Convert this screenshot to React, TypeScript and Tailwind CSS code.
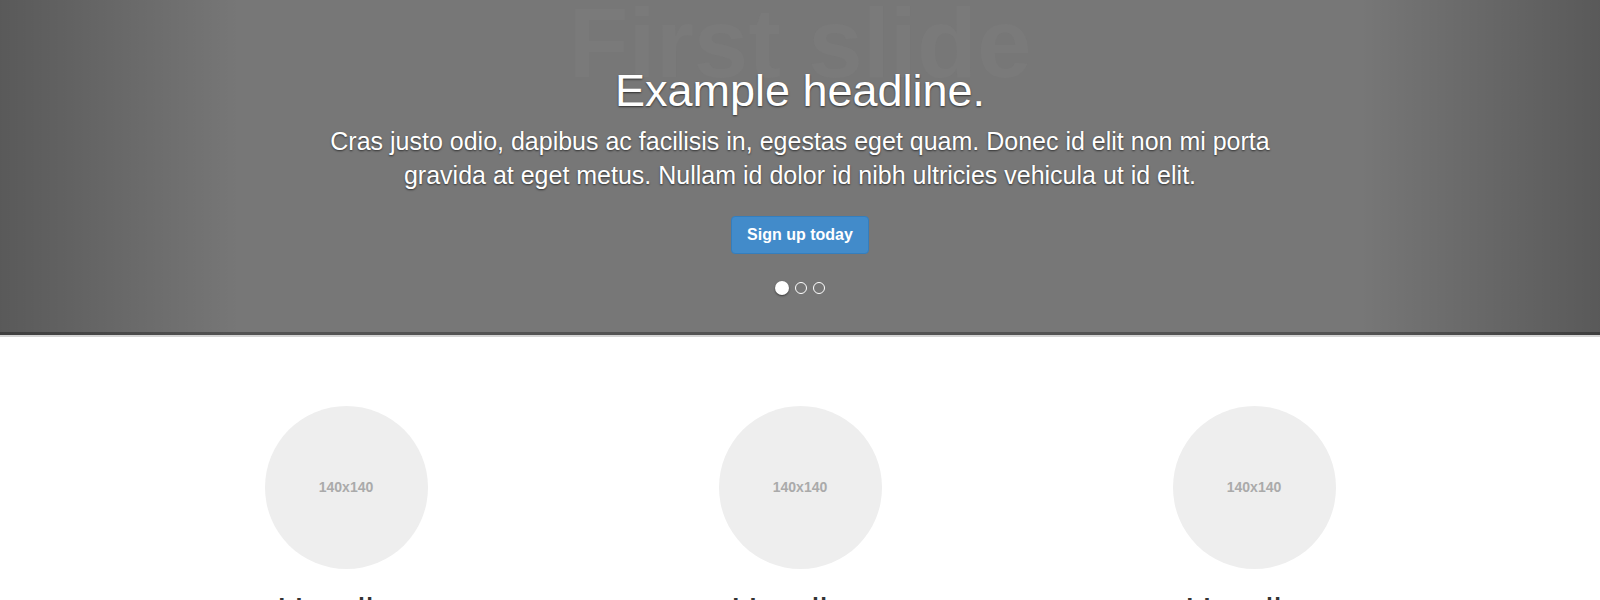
export default function App() {
  const features = ["Heading", "Heading", "Heading"];

  return (
    <div className="min-h-[600px] bg-white font-['Liberation_Sans',Arial,sans-serif] text-[#333] overflow-hidden">
      {/* carousel */}
      <div className="relative flex h-[335px] flex-col bg-[#777] overflow-hidden">
        <div className="pointer-events-none absolute left-1/2 top-[-6px] -translate-x-1/2 whitespace-nowrap text-[98px] font-bold leading-none text-[#7a7a7a]">
          First slide
        </div>

        <div className="relative flex flex-col items-center px-[20%] pt-[66px] text-center text-white [text-shadow:0_1px_2px_rgba(0,0,0,0.6)]">
          <h1 className="text-[45px] leading-[1.1]">Example headline.</h1>
          <p className="mt-[8px] text-[25px] leading-[34px]">
            Cras justo odio, dapibus ac facilisis in, egestas eget quam. Donec id elit non mi porta gravida at eget metus. Nullam id dolor id nibh ultricies vehicula ut id elit.
          </p>
          <button className="mt-[24px] flex h-[38px] items-center rounded-[4px] border border-[#357ebd] bg-[#428bca] px-[15px] text-[16px] font-bold text-white [text-shadow:none]">
            Sign up today
          </button>
          <div className="mt-[27px] flex items-center gap-[6px]">
            <span className="h-[14px] w-[14px] rounded-full bg-white shadow-[0_1px_2px_rgba(0,0,0,0.5)]" />
            <span className="h-[12px] w-[12px] rounded-full border border-white" />
            <span className="h-[12px] w-[12px] rounded-full border border-white" />
          </div>
        </div>

        <div className="mt-auto h-[3px] bg-black/30" />

        <div className="pointer-events-none absolute inset-y-0 left-0 w-[15%] bg-gradient-to-r from-black/25 to-transparent" />
        <div className="pointer-events-none absolute inset-y-0 right-0 w-[15%] bg-gradient-to-l from-black/25 to-transparent" />
      </div>
      <div className="h-[2px] bg-[#d4d4d4]" />

      {/* marketing */}
      <div className="mx-auto mt-[69px] grid w-[1362px] grid-cols-3">
        {features.map((title, i) => (
          <div key={i} className="flex flex-col items-center px-[17px] text-center">
            <div className="flex h-[163px] w-[163px] items-center justify-center rounded-full bg-[#eee] text-[14px] font-bold text-[#aaa]">
              140x140
            </div>
            <h2 className="mt-[23px] text-[37px] leading-[1.1] text-[#333]">{title}</h2>
          </div>
        ))}
      </div>
    </div>
  );
}
